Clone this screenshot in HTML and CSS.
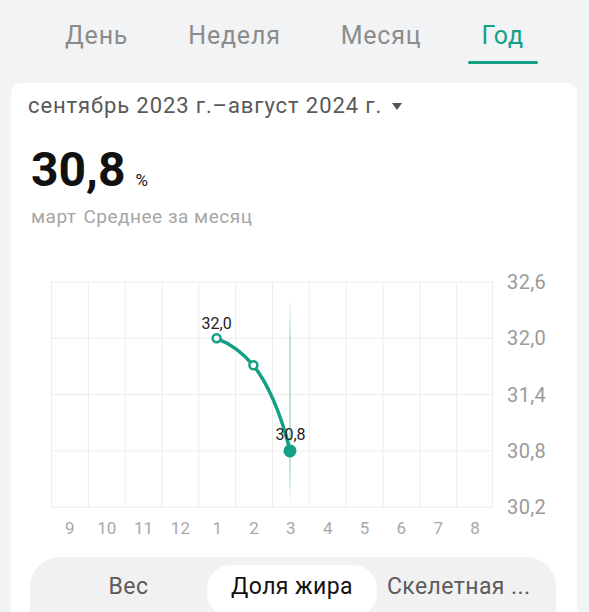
FILE: index.html
```html
<!DOCTYPE html>
<html lang="ru">
<head>
<meta charset="utf-8">
<link rel="stylesheet" href="styles.css">
</head>
<body>
<nav class="tabs">
  <span class="tab">День</span>
  <span class="tab">Неделя</span>
  <span class="tab">Месяц</span>
  <span class="tab active">Год</span>
</nav>
<section class="card">
  <div class="range">сентябрь 2023 г.–август 2024 г. <span class="caret"></span></div>
  <div class="value"><span class="num">30,8</span><span class="unit">%</span></div>
  <div class="sub"><span class="month">март</span><span>Среднее за месяц</span></div>
  <svg class="chart" width="566" height="280" viewBox="11 260 566 280" xmlns="http://www.w3.org/2000/svg">
    <defs>
      <linearGradient id="hl" x1="0" y1="0" x2="0" y2="1">
        <stop offset="0" stop-color="#14a085" stop-opacity="0"/>
        <stop offset="0.2" stop-color="#14a085" stop-opacity="0.35"/>
        <stop offset="0.8" stop-color="#14a085" stop-opacity="0.35"/>
        <stop offset="1" stop-color="#14a085" stop-opacity="0"/>
      </linearGradient>
    </defs>
    <g stroke="#ececec" stroke-width="1">
      <line x1="51" y1="281" x2="493" y2="281"/>
      <line x1="51" y1="337.3" x2="493" y2="337.3"/>
      <line x1="51" y1="393.6" x2="493" y2="393.6"/>
      <line x1="51" y1="449.9" x2="493" y2="449.9"/>
      <line x1="51" y1="506.2" x2="493" y2="506.2"/>
      <line x1="51.5" y1="281" x2="51.5" y2="506.2"/>
      <line x1="88.3" y1="281" x2="88.3" y2="506.2"/>
      <line x1="125.2" y1="281" x2="125.2" y2="506.2"/>
      <line x1="162" y1="281" x2="162" y2="506.2"/>
      <line x1="198.8" y1="281" x2="198.8" y2="506.2"/>
      <line x1="235.7" y1="281" x2="235.7" y2="506.2"/>
      <line x1="272.5" y1="281" x2="272.5" y2="506.2"/>
      <line x1="309.3" y1="281" x2="309.3" y2="506.2"/>
      <line x1="346.2" y1="281" x2="346.2" y2="506.2"/>
      <line x1="383" y1="281" x2="383" y2="506.2"/>
      <line x1="419.8" y1="281" x2="419.8" y2="506.2"/>
      <line x1="456.7" y1="281" x2="456.7" y2="506.2"/>
      <line x1="492.5" y1="281" x2="492.5" y2="506.2"/>
    </g>
    <rect x="289.2" y="296" width="1.6" height="210" fill="url(#hl)"/>
    <g class="ylab">
      <text x="507" y="281">32,6</text>
      <text x="507" y="337.3">32,0</text>
      <text x="507" y="393.6">31,4</text>
      <text x="507" y="449.9">30,8</text>
      <text x="507" y="506.2">30,2</text>
    </g>
    <g class="xlab">
      <text x="69.9" y="527">9</text>
      <text x="106.7" y="527">10</text>
      <text x="143.6" y="527">11</text>
      <text x="180.4" y="527">12</text>
      <text x="217.2" y="527">1</text>
      <text x="254.1" y="527">2</text>
      <text x="290.9" y="527">3</text>
      <text x="327.7" y="527">4</text>
      <text x="364.6" y="527">5</text>
      <text x="401.4" y="527">6</text>
      <text x="438.2" y="527">7</text>
      <text x="475.1" y="527">8</text>
    </g>
    <path d="M216.6,337.3 C230,342.5 243,352 253.4,364.3 C267,381 281,412 290,449.9" fill="none" stroke="#14a085" stroke-width="3.5" stroke-linecap="round"/>
    <circle cx="216.6" cy="337.3" r="4" fill="#fff" stroke="#14a085" stroke-width="2.5"/>
    <circle cx="253.4" cy="364.3" r="4" fill="#fff" stroke="#14a085" stroke-width="2.5"/>
    <circle cx="290" cy="449.9" r="6.5" fill="#14a085"/>
    <g class="plab">
      <text x="216.6" y="322">32,0</text>
      <text x="290.5" y="433">30,8</text>
    </g>
  </svg>
  <div class="seg">
    <span class="seg-item first">Вес</span>
    <span class="seg-item on">Доля жира</span>
    <span class="seg-item last">Скелетная ...</span>
  </div>
</section>
</body>
</html>
```
FILE: styles.css
```css
html, body {
  margin: 0;
  padding: 0;
}
body {
  background: #f1f3f5;
  font-family: Roboto, "Noto Sans", "DejaVu Sans", sans-serif;
  width: 589px;
  height: 612px;
  overflow: hidden;
}
.tabs {
  display: flex;
  gap: 60px;
  padding: 20px 0 0 65px;
  height: 63px;
  box-sizing: border-box;
}
.tab {
  position: relative;
  font-size: 25px;
  letter-spacing: 0.8px;
  line-height: 32px;
  height: 32px;
  color: #8c8c8c;
}
.tab.active {
  color: #14a085;
}
.tab.active::after {
  content: "";
  position: absolute;
  left: 50%;
  top: 41px;
  width: 70px;
  height: 3px;
  margin-left: -35px;
  border-radius: 2px;
  background: #14a085;
}
.card {
  margin: 20px 12px 0 11px;
  background: #fff;
  border-radius: 10px 10px 0 0;
  height: 540px;
  padding-top: 9px;
  box-sizing: border-box;
}
.range {
  padding-left: 17px;
  font-size: 22px;
  letter-spacing: 0.9px;
  line-height: 28px;
  color: #595959;
  display: flex;
  align-items: center;
}
.caret {
  display: inline-block;
  width: 0;
  height: 0;
  margin-left: 10px;
  border-left: 5px solid transparent;
  border-right: 5px solid transparent;
  border-top: 7px solid #555;
}
.value {
  margin-top: 22px;
  padding-left: 20px;
  display: flex;
  align-items: baseline;
  height: 56px;
}
.num {
  font-size: 48px;
  font-weight: 700;
  line-height: 56px;
  color: #111;
}
.unit {
  font-size: 17px;
  margin-left: 10px;
  color: #222;
}
.sub {
  padding-left: 20px;
  margin-top: 7px;
  font-size: 19px;
  letter-spacing: 0.5px;
  line-height: 24px;
  color: #a6a6a6;
  display: flex;
  gap: 7px;
}
.chart {
  display: block;
  margin-top: 32px;
}
.ylab text {
  font-size: 20px;
  letter-spacing: 0.4px;
  fill: #9a9a9a;
  dominant-baseline: central;
}
.xlab text {
  font-size: 17px;
  fill: #a8a8a8;
  text-anchor: middle;
  dominant-baseline: central;
}
.plab text {
  font-size: 16px;
  fill: #222;
  text-anchor: middle;
  dominant-baseline: central;
}
.seg {
  margin: 16px 21px 0 19px;
  height: 60px;
  border-radius: 30px 30px 0 0;
  background: #f1f1f1;
  display: flex;
  padding: 8px 0 0 0;
  box-sizing: border-box;
}
.seg-item {
  font-size: 23px;
  letter-spacing: 0.4px;
  line-height: 44px;
  color: #5c5c5c;
  white-space: nowrap;
}
.seg-item.first {
  flex: 0 0 177px;
  box-sizing: border-box;
  padding-left: 20px;
  text-align: center;
}
.seg-item.on {
  flex: 0 0 170px;
  text-align: center;
  background: #fff;
  border-radius: 24px;
  color: #111;
}
.seg-item.last {
  flex: 1;
  padding-left: 10px;
}
```
